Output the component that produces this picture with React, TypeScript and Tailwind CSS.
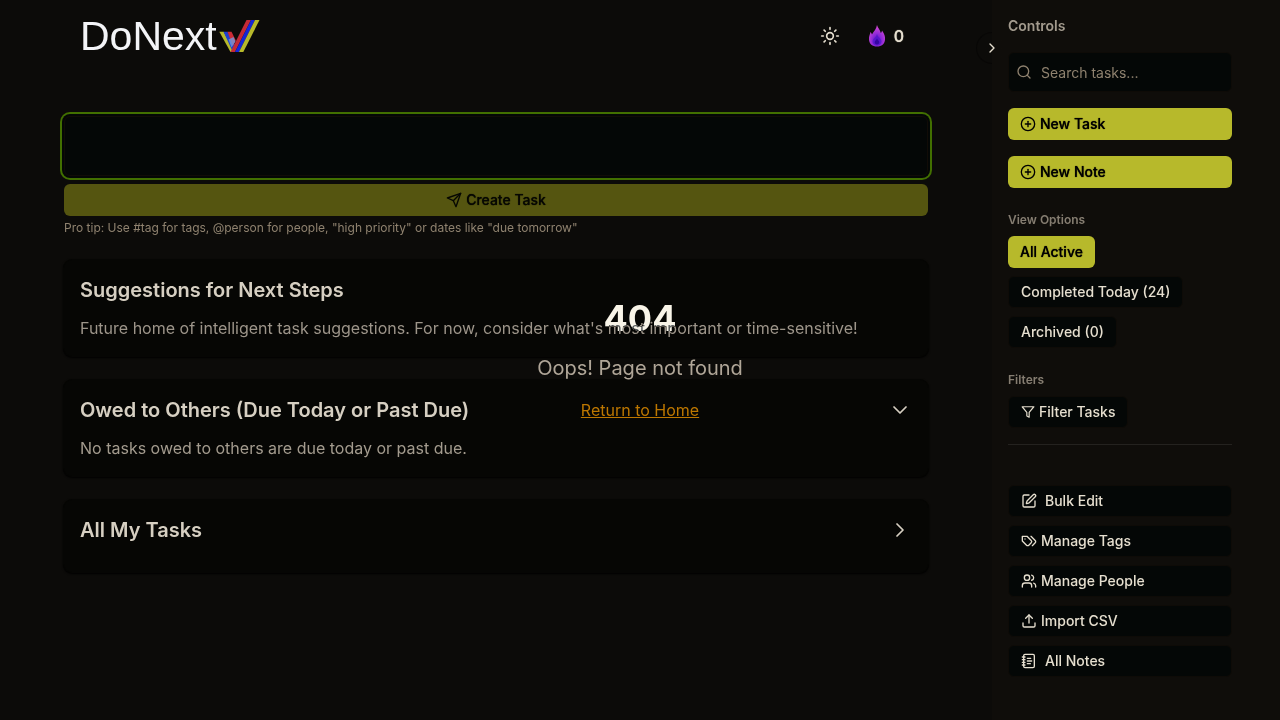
import { ChevronDown, ChevronRight, CirclePlus, NotebookText, Search, SquarePen, Sun, Upload, Users } from 'lucide-react';
import type { ReactNode } from 'react';

function Logo() {
  return (
    <a href="#" aria-label="DoNext" className="flex h-8 items-center gap-px">
      <span className="font-['Liberation_Sans',sans-serif] text-[41px] leading-8 text-[#f3f4f7]">DoNext</span>
      <svg width="42" height="32" viewBox="0 0 42 32" aria-hidden="true">
        <path d="M1.300 11.800h4.400L16.500 32H12.500z" fill="#b7b92b" />
        <path d="M5.500 11.800H9.500l8 14-3 5.500z" fill="#1c3fd0" />
        <path d="M9.500 11.800h4l4.300 8.700-3 5.500z" fill="#cc2b36" />
        <path d="M10.500 19.500l5-2.500 2 4.500-4 6z" fill="#6f9ade" opacity=".8" />
        <path d="M12.500 32 28.500 0H33L17 32z" fill="#c42a36" />
        <path d="M17 32 33 0h4L21 32z" fill="#1526d8" />
        <path d="M21 32 37 0h4.500L25.300 32z" fill="#b7b92b" />
      </svg>
    </a>
  );
}

function Flame() {
  return (
    <svg width="18" height="22" viewBox="0 0 18 22" aria-hidden="true">
      <defs>
        <radialGradient id="flame" cx="50%" cy="72%" r="62%">
          <stop offset="0" stopColor="#5a14c4" />
          <stop offset=".5" stopColor="#8f2ad8" />
          <stop offset="1" stopColor="#cf45d4" />
        </radialGradient>
      </defs>
      <path d="M9 0c.6 3 3.200 4.500 3.800 8 .8-.5 1-1.500 1.200-2.500C16.500 9 17.300 11.500 17 14.500 16.800 19 13.500 21.500 9 21.500S1.200 19 1 14.500C.8 11 2 9.500 2.500 7c.8.8 1.200 1.500 1.500 2.500C5.500 6.500 8.500 4 9 0z" fill="url(#flame)" />
      <path d="M9 9c.5 3 4.500 4.500 4.500 7.500 0 2.500-2 4-4.500 4s-4.500-1.500-4.500-4C4.500 13.500 8.500 12 9 9z" fill="#5014cc" opacity=".75" />
      <path d="M9 13.500c.3 1.500 2.300 2 2.300 3.800 0 1.300-1 2.200-2.300 2.200s-2.300-.9-2.300-2.200c0-1.800 2-2.300 2.300-3.800z" fill="#3306a0" />
    </svg>
  );
}

function LineIcon({ size = 16, children }: { size?: number; children: ReactNode }) {
  return (
    <svg width={size} height={size} viewBox="0 0 24 24" fill="none" stroke="currentColor" strokeWidth="2" strokeLinecap="round" strokeLinejoin="round" className="shrink-0" aria-hidden="true">
      {children}
    </svg>
  );
}

function TagsIcon() {
  return (
    <LineIcon>
      <path d="M9 5H2v7l6.290 6.290c.94.94 2.480.94 3.420 0l3.580-3.580c.94-.94.94-2.480 0-3.420L9 5Z" />
      <path d="M6 9.010V9" />
      <path d="m15 5 6.300 6.300a2.400 2.400 0 0 1 0 3.400L17 19" />
    </LineIcon>
  );
}

function SendIcon() {
  return (
    <LineIcon>
      <path d="m22 2-7 20-4-9-9-4Z" />
      <path d="M22 2 11 13" />
    </LineIcon>
  );
}

function FilterIcon() {
  return (
    <LineIcon size={14}>
      <polygon points="22 3 2 3 10 12.46 10 19 14 21 14 12.46 22 3" />
    </LineIcon>
  );
}

function Card({ title, icon, children }: { title: string; icon?: ReactNode; children?: ReactNode }) {
  return (
    <section className="rounded-lg bg-[#060604] p-4 shadow-[0_0_0_1px_#060604,0_1px_2px_1px_#000000]">
      <div className="mb-3 flex items-center justify-between">
        <h2 className="text-xl font-semibold text-[#d6cfc2]">{title}</h2>
        {icon}
      </div>
      {children}
    </section>
  );
}

const solid = 'flex h-8 items-center gap-1 rounded-md bg-[#b7b92b] px-3 text-sm font-medium text-black [text-shadow:0_0_1px_#000000]';
const outline = 'flex h-8 items-center gap-1 rounded-md border border-[#0e0b07] bg-[#040706] px-3 text-sm font-medium text-[#e6dfcf]';

export default function App() {
  return (
    <div className="relative flex min-h-screen bg-[#0c0b09] font-['Inter',sans-serif] text-[#e6dfcf]">
      <div className="min-w-0 flex-1">
        <header className="flex h-[72px] items-center justify-between pr-[88px] pl-20">
          <Logo />
          <div className="flex items-center gap-7">
            <button type="button" aria-label="Toggle theme"><Sun size={20} /></button>
            <div className="flex items-center gap-2 font-medium [text-shadow:0_0_1px_#e6dfcf]"><Flame />0</div>
          </div>
        </header>
        <main className="px-16 pt-11">
          <form>
            <textarea aria-label="New task" className="block h-[60px] w-full resize-none rounded-md border border-[#110c07] bg-[#040706] ring-2 ring-[#427000] ring-offset-2 ring-offset-[#040706] outline-none" />
            <button type="button" className="mt-2 flex h-8 w-full items-center justify-center gap-1 rounded-md bg-[#555510] text-sm font-medium text-[#060702] [text-shadow:0_0_1px_#060702]">
              <SendIcon />Create Task
            </button>
            <p className="mt-1 text-xs text-[#8f826f]">Pro tip: Use #tag for tags, @person for people, "high priority" or dates like "due tomorrow"</p>
          </form>
          <div className="mt-6 flex flex-col gap-6">
            <Card title="Suggestions for Next Steps">
              <p className="relative z-20 text-[#a39b8e] mix-blend-difference">Future home of intelligent task suggestions. For now, consider what's most important or time-sensitive!</p>
            </Card>
            <Card title="Owed to Others (Due Today or Past Due)" icon={<button type="button" aria-label="Collapse" className="text-[#d6cfc2]"><ChevronDown size={24} strokeWidth={1.75} /></button>}>
              <p className="text-[#a39b8e]">No tasks owed to others are due today or past due.</p>
            </Card>
            <Card title="All My Tasks" icon={<button type="button" aria-label="Expand" className="text-[#d6cfc2]"><ChevronRight size={24} strokeWidth={1.75} /></button>} />
          </div>
        </main>
      </div>

      <aside className="relative w-72 shrink-0 bg-[#0f0d0a] pt-4 pr-12 pl-4">
        <button type="button" aria-label="Collapse controls" className="absolute top-8 -left-4 flex size-8 items-center justify-center rounded-full bg-linear-to-r from-[#0c0b09] from-50% to-[#0f0d0a] to-50%">
          <span className="absolute inset-y-0 left-0 w-4 rounded-l-full border border-r-0 border-[#080706]" />
          <ChevronRight size={16} />
        </button>
        <h2 className="text-sm font-semibold text-[#a39b8e]">Controls</h2>
        <div className="relative mt-4">
          <Search size={16} className="absolute top-3 left-2 text-[#8f826f]" />
          <input type="search" aria-label="Search tasks" placeholder="Search tasks..." className="h-10 w-full rounded-md border border-[#0e0b07] bg-[#040706] pr-2 pl-8 text-sm placeholder:text-[#8f826f]" />
        </div>
        <div className="mt-4 flex flex-col gap-4">
          <button type="button" className={solid}><CirclePlus size={16} />New Task</button>
          <button type="button" className={solid}><CirclePlus size={16} />New Note</button>
        </div>
        <h3 className="mt-6 text-xs font-semibold text-[#857d71]">View Options</h3>
        <div className="mt-2 flex flex-col items-start gap-2">
          <button type="button" className={solid}>All Active</button>
          <button type="button" className={outline}>Completed Today (24)</button>
          <button type="button" className={outline}>Archived (0)</button>
        </div>
        <h3 className="mt-6 text-xs font-semibold text-[#857d71]">Filters</h3>
        <button type="button" className={outline + ' mt-2'}><FilterIcon />Filter Tasks</button>
        <hr className="mt-4 border-[#24221f]" />
        <div className="mt-10 flex flex-col gap-2">
          <button type="button" className={outline}><SquarePen size={16} className="mr-1" />Bulk Edit</button>
          <button type="button" className={outline}><TagsIcon />Manage Tags</button>
          <button type="button" className={outline}><Users size={16} />Manage People</button>
          <button type="button" className={outline}><Upload size={16} />Import CSV</button>
          <button type="button" className={outline}><NotebookText size={16} className="mr-1" />All Notes</button>
        </div>
      </aside>

      <div className="pointer-events-none absolute inset-0 z-10 flex flex-col items-center justify-center gap-4">
        <h1 className="text-4xl font-bold text-[#f8f4e8]">404</h1>
        <p className="text-xl text-[#b0a698]">Oops! Page not found</p>
        <a href="#" className="pointer-events-auto text-[#bd7700] underline">Return to Home</a>
      </div>
    </div>
  );
}
